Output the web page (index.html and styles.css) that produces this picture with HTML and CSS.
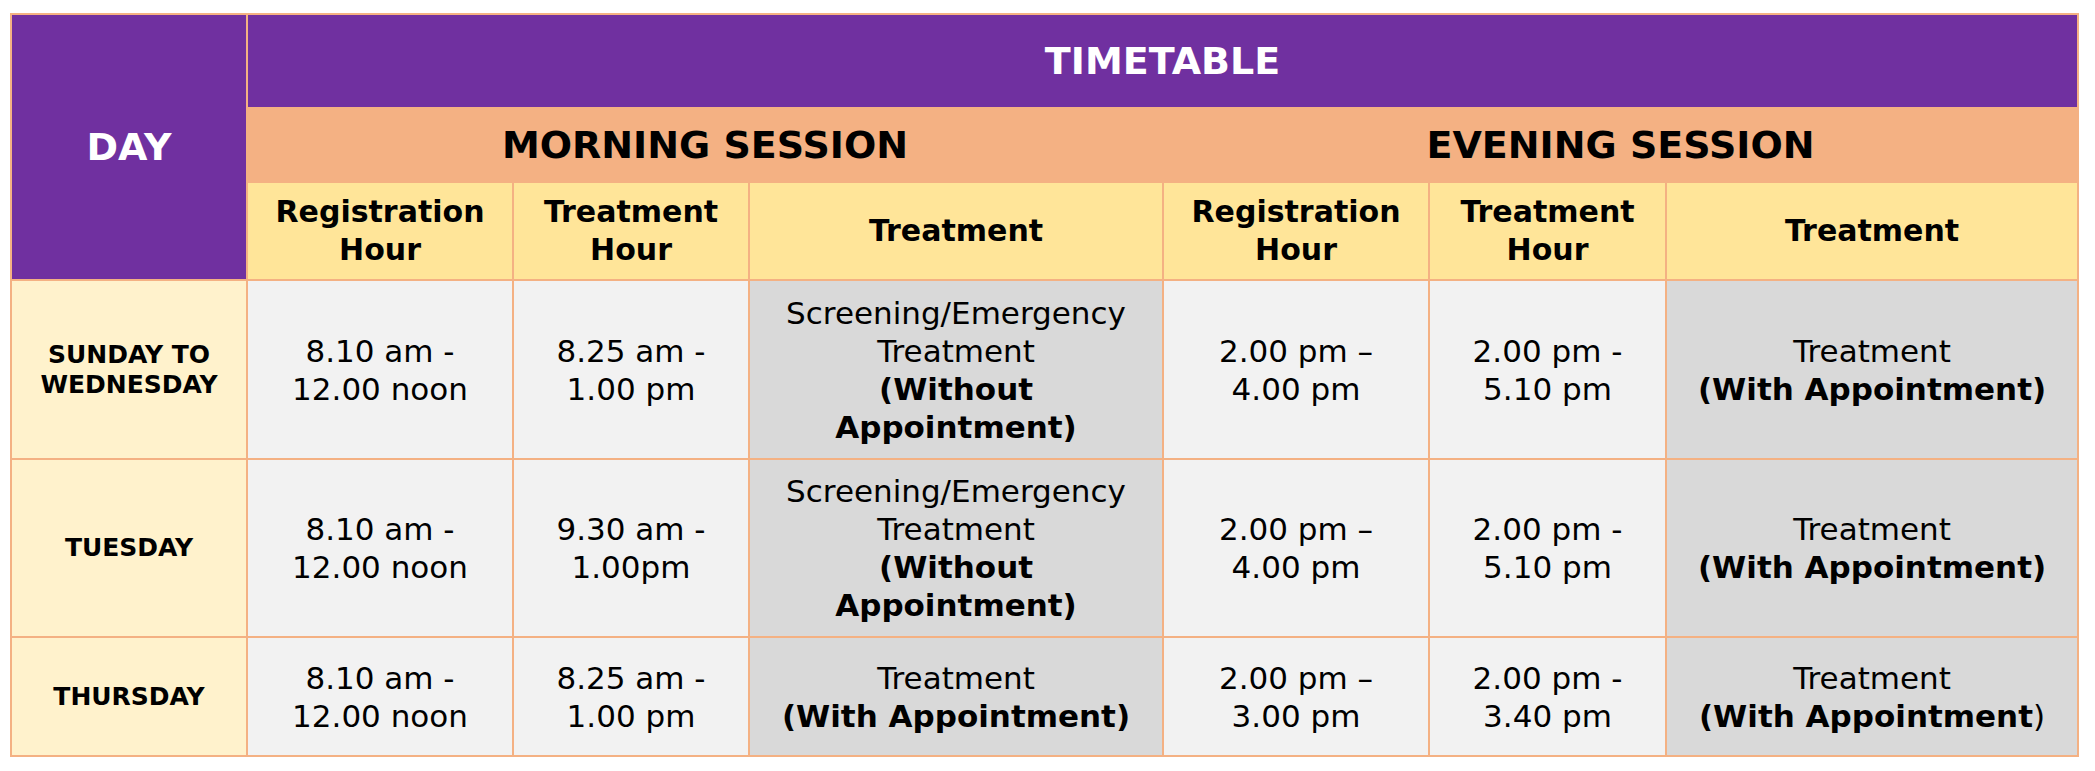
FILE: index.html
```html
<!DOCTYPE html>
<html lang="en">
<head>
<meta charset="utf-8">
<title>Timetable</title>
<link rel="stylesheet" href="styles.css">
</head>
<body>
<div class="page">
<table class="timetable">
  <colgroup>
    <col class="c-day">
    <col class="c-reg">
    <col class="c-hour">
    <col class="c-treat">
    <col class="c-reg">
    <col class="c-hour2">
    <col class="c-treat2">
  </colgroup>
  <thead>
    <tr class="r-title">
      <th rowspan="3" class="day-head">DAY</th>
      <th colspan="6" class="title">TIMETABLE</th>
    </tr>
    <tr class="r-session">
      <th colspan="3" class="session morning">MORNING SESSION</th>
      <th colspan="3" class="session evening">EVENING SESSION</th>
    </tr>
    <tr class="r-sub">
      <th class="sub">Registration<br>Hour</th>
      <th class="sub">Treatment<br>Hour</th>
      <th class="sub">Treatment</th>
      <th class="sub">Registration<br>Hour</th>
      <th class="sub">Treatment<br>Hour</th>
      <th class="sub">Treatment</th>
    </tr>
  </thead>
  <tbody>
    <tr class="r-1">
      <th class="day">SUNDAY TO<br>WEDNESDAY</th>
      <td>8.10 am -<br>12.00 noon</td>
      <td>8.25 am -<br>1.00 pm</td>
      <td class="treat">Screening/Emergency<br>Treatment<br><b>(Without<br>Appointment)</b></td>
      <td>2.00 pm –<br>4.00 pm</td>
      <td>2.00 pm -<br>5.10 pm</td>
      <td class="treat">Treatment<br><b>(With Appointment)</b></td>
    </tr>
    <tr class="r-2">
      <th class="day">TUESDAY</th>
      <td>8.10 am -<br>12.00 noon</td>
      <td>9.30 am -<br>1.00pm</td>
      <td class="treat">Screening/Emergency<br>Treatment<br><b>(Without<br>Appointment)</b></td>
      <td>2.00 pm –<br>4.00 pm</td>
      <td>2.00 pm -<br>5.10 pm</td>
      <td class="treat">Treatment<br><b>(With Appointment)</b></td>
    </tr>
    <tr class="r-3">
      <th class="day">THURSDAY</th>
      <td>8.10 am -<br>12.00 noon</td>
      <td>8.25 am -<br>1.00 pm</td>
      <td class="treat">Treatment<br><b>(With Appointment)</b></td>
      <td>2.00 pm –<br>3.00 pm</td>
      <td>2.00 pm -<br>3.40 pm</td>
      <td class="treat">Treatment<br><b>(With Appointment</b>)</td>
    </tr>
  </tbody>
</table>
</div>
</body>
</html>
```

FILE: styles.css
```css
html, body {
  margin: 0;
  padding: 0;
  background: #ffffff;
}

.page {
  padding: 13px 0 0 10px;
}

.timetable {
  border-collapse: collapse;
  table-layout: fixed;
  width: 2067px;
  font-family: "DejaVu Sans", Verdana, sans-serif;
  color: #000000;
  text-align: center;
}

.c-day { width: 236px; }
.c-reg { width: 266px; }
.c-hour { width: 236px; }
.c-treat { width: 414px; }
.c-hour2 { width: 237px; }
.c-treat2 { width: 412px; }

.timetable th,
.timetable td {
  border: 2px solid #f4b183;
  padding: 0;
  vertical-align: middle;
  text-align: center;
}

.r-title { height: 94px; }
.r-session { height: 74px; }
.r-sub { height: 98px; }
.r-1 { height: 179px; }
.r-2 { height: 178px; }
.r-3 { height: 119px; }

.day-head {
  background: #7030a0;
  color: #ffffff;
  font-size: 38px;
  font-weight: bold;
  border-top-color: #ee8a45;
  border-right: 1px solid #8c5cb6;
}

.title {
  background: #7030a0;
  color: #ffffff;
  font-size: 38px;
  font-weight: bold;
  border-top-color: #ee8a45;
  border-right-color: #ee8a45;
  border-bottom-color: #ee8a45;
  border-left: 1px solid #8c5cb6;
}

.session {
  background: #f4b183;
  font-size: 38px;
  font-weight: bold;
  border-top-color: #ee8a45;
}

.morning {
  border-right-color: #ffffff;
}

.evening {
  border-left-color: #ffffff;
}

.sub {
  background: #ffe599;
  font-size: 30px;
  font-weight: bold;
  line-height: 38px;
}

.day {
  background: #fff2cc;
  font-size: 25px;
  font-weight: bold;
  line-height: 30px;
}

.timetable td {
  background: #f2f2f2;
  font-size: 31px;
  line-height: 38px;
  white-space: nowrap;
}

.timetable td.treat {
  background: #d9d9d9;
}
```
